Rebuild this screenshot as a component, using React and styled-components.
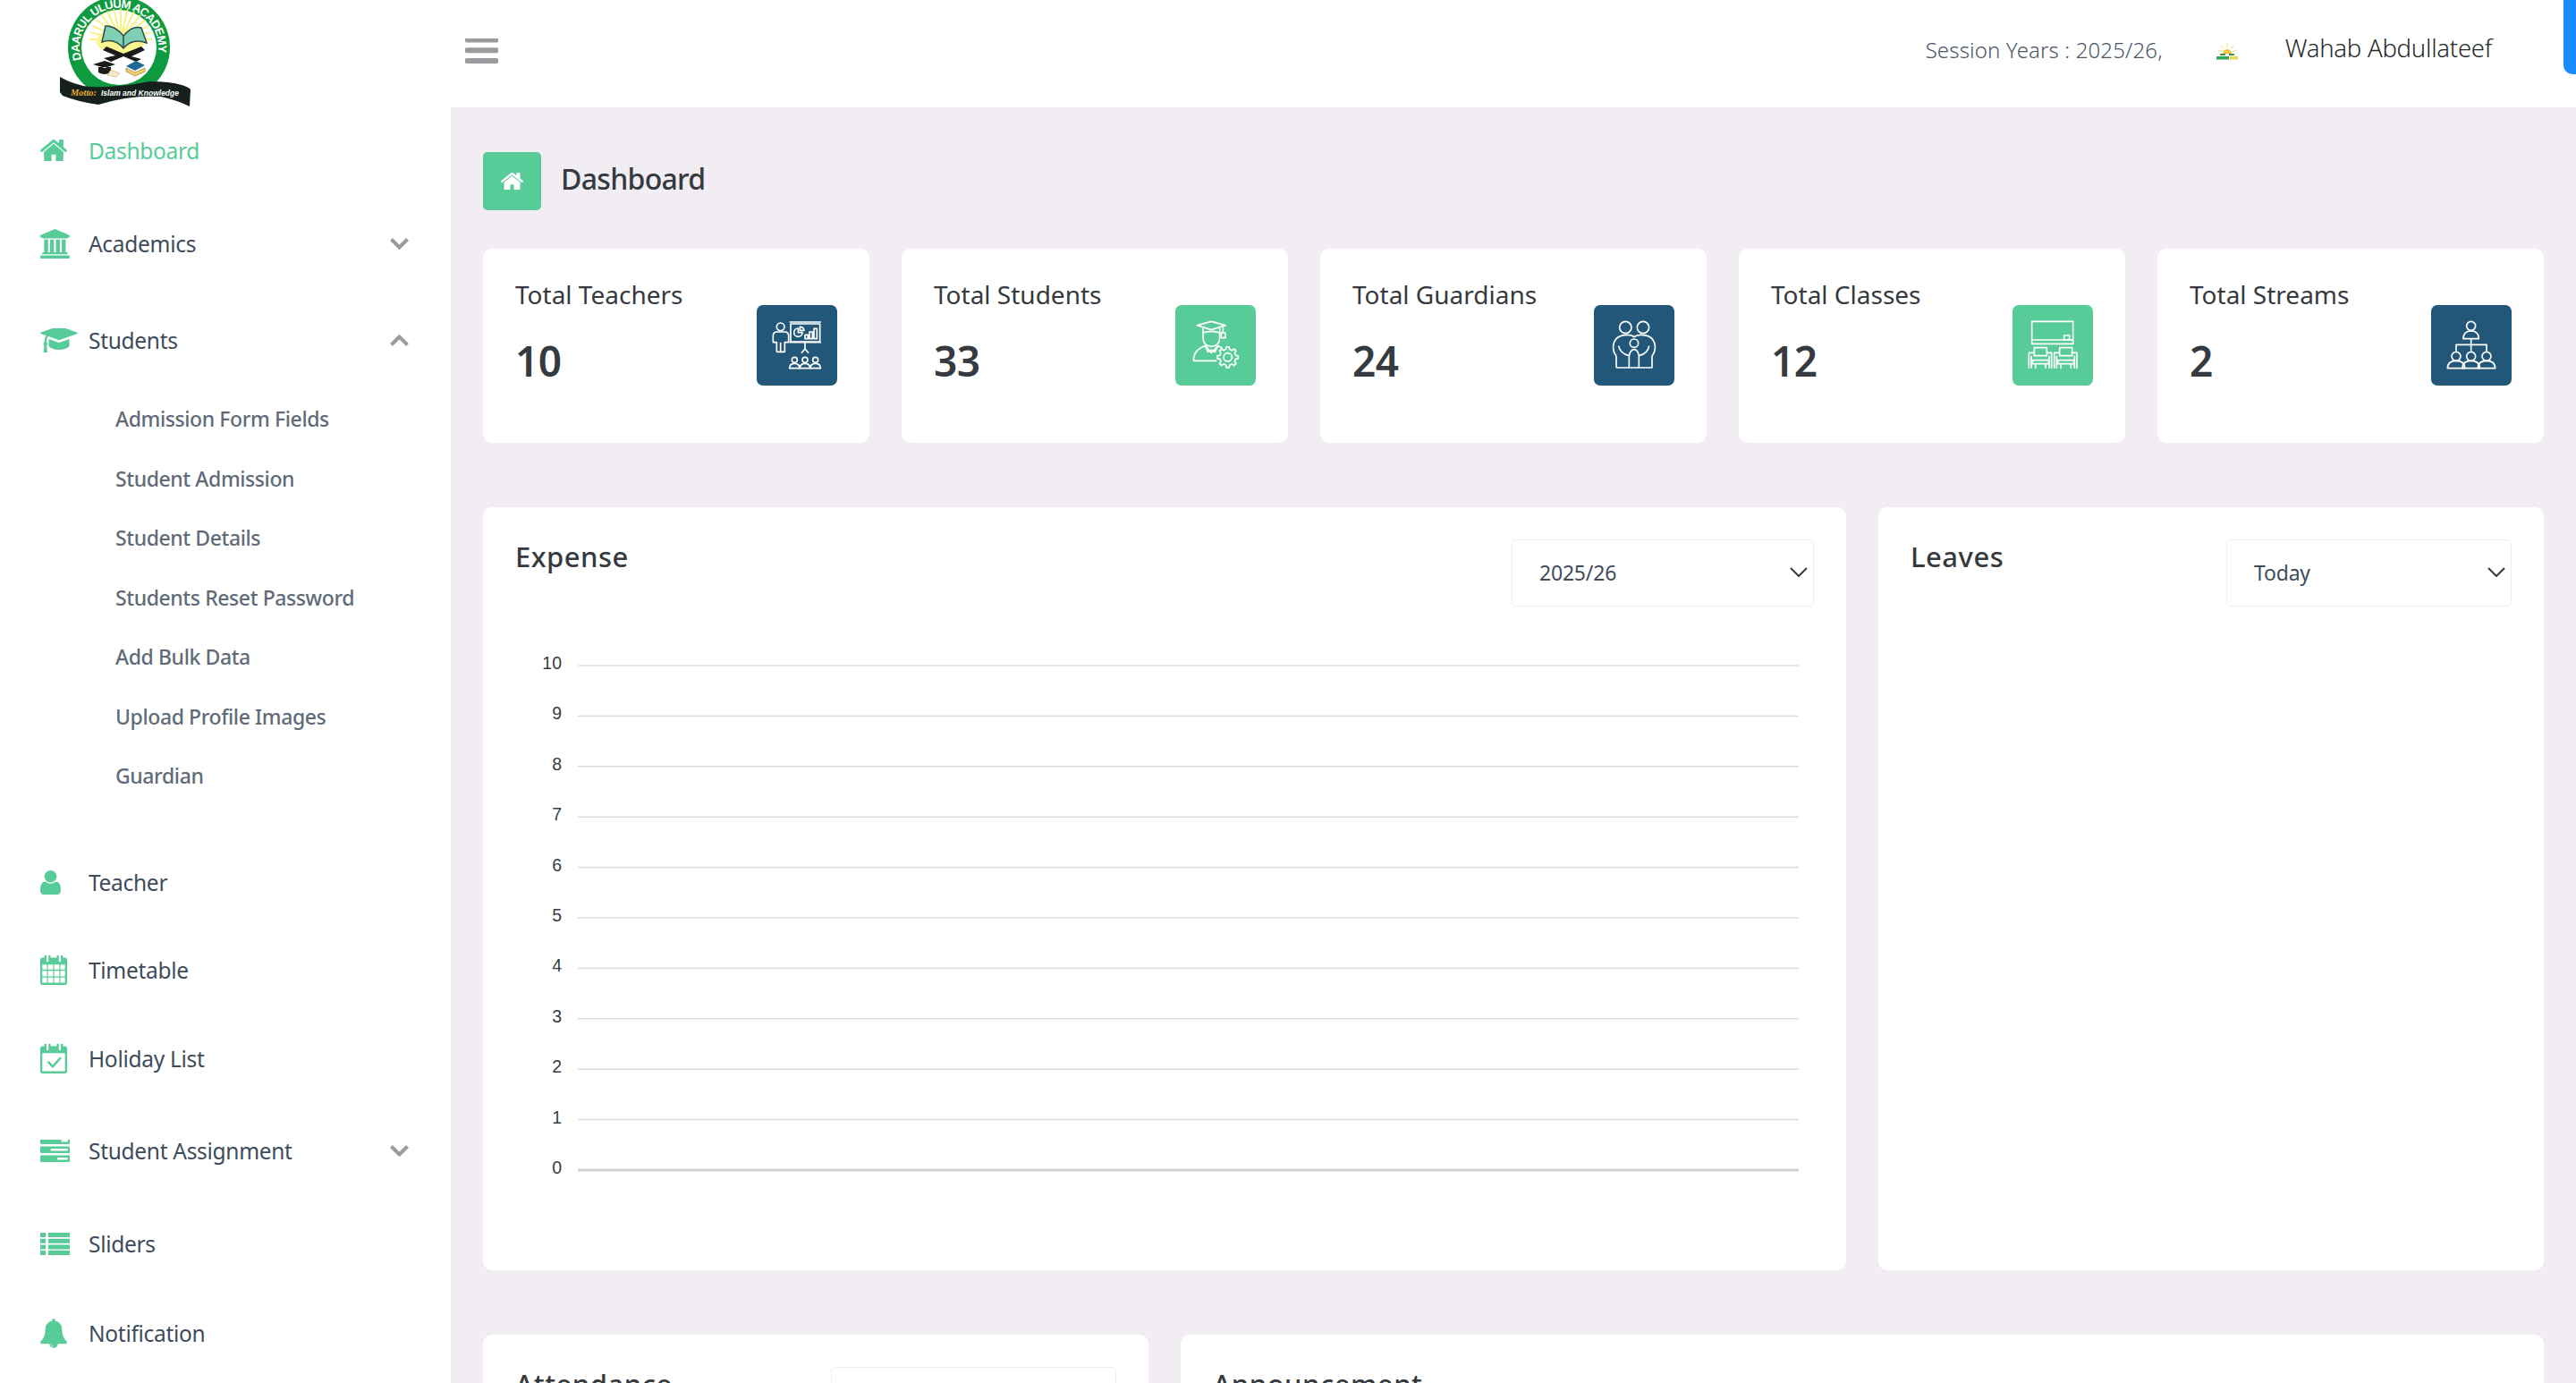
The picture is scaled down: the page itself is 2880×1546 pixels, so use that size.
import React from 'react';
import styled, { createGlobalStyle } from 'styled-components';

const GREEN = '#57cc99';
const NAVY = '#22577a';
const FONT = '"Noto Sans", "Open Sans", sans-serif';

const GlobalStyle = createGlobalStyle`
  html, body {
    margin: 0;
    padding: 0;
    height: 100%;
    overflow: hidden;
    background: #f2edf3;
    font-family: ${FONT};
  }
  * { box-sizing: border-box; }
`;

// font awesome 4 glyphs
const ICONS = {
  home: ['96 256 1600 1280', 'M1472 992v480q0 26-19 45t-45 19h-384v-384h-256v384h-384q-26 0-45-19t-19-45v-480q0-1 .5-3t.5-3l575-474 575 474q1 2 1 6zm223-69l-62 74q-8 9-21 11h-3q-13 0-21-7l-692-577-692 577q-12 8-24 7-13-2-21-11l-62-74q-8-10-7-23.5t11-21.5l719-599q32-26 76-26t76 26l244 204v-195q0-14 9-23t23-9h192q14 0 23 9t9 23v408l219 182q10 8 11 21.5t-7 23.5z'],
  bank: ['0 0 2048 1792', 'M960 0l960 384v128h-128q0 26-20.5 45t-48.5 19h-1526q-28 0-48.5-19t-20.5-45h-128v-128zm-704 640h256v768h128v-768h256v768h128v-768h256v768h128v-768h256v768h59q28 0 48.5 19t20.5 45v64h-1664v-64q0-26 20.5-45t48.5-19h59v-768zm1595 960q28 0 48.5 19t20.5 45v128h-1920v-128q0-26 20.5-45t48.5-19h1782z'],
  cap: ['0 256 2304 1300', 'M1774 836l18 316q4 69-82 128t-235 93.5-323 34.5-323-34.5-235-93.5-82-128l18-316 574 181q22 7 48 7t48-7zm530-324q0 23-22 31l-1120 352q-4 1-10 1t-10-1l-652-206q-43 34-71 111.5t-34 178.5q63 36 63 109 0 69-58 107l58 433q2 14-8 25-9 11-24 11h-192q-15 0-24-11-10-11-8-25l58-433q-58-38-58-107 0-73 65-111 11-207 98-330l-333-104q-22-8-22-31t22-31l1120-352q4-1 10-1t10 1l1120 352q22 8 22 31z'],
  user: ['256 128 1280 1536', 'M1536 1399q0 109-62.5 187t-150.500 78h-854q-88 0-150.500-78t-62.500-187q0-85 8.500-160.500t31.500-152 58.500-131 94-89 134.500-34.500q131 128 313 128t313-128q76 0 134.500 34.500t94 89 58.500 131 31.500 152 8.500 160.500zm-256-887q0 159-112.500 271.500t-271.500 112.500-271.500-112.500-112.500-271.500 112.500-271.500 271.500-112.500 271.500 112.500 112.500 271.500z'],
  calendar: ['0 128 1664 1664', 'M128 1664h288v-288h-288v288zm352 0h320v-288h-320v288zm-352-352h288v-320h-288v320zm352 0h320v-320h-320v320zm-352-384h288v-288h-288v288zm736 736h320v-288h-320v288zm-384-736h320v-288h-320v288zm768 736h288v-288h-288v288zm-384-352h320v-320h-320v320zm-352-864v-288q0-13-9.500-22.500t-22.500-9.500h-64q-13 0-22.500 9.500t-9.500 22.500v288q0 13 9.500 22.500t22.500 9.500h64q13 0 22.500-9.500t9.500-22.500zm736 864h288v-320h-288v320zm-384-384h320v-288h-320v288zm384 0h288v-288h-288v288zm32-480v-288q0-13-9.500-22.500t-22.500-9.500h-64q-13 0-22.500 9.500t-9.500 22.500v288q0 13 9.500 22.500t22.500 9.500h64q13 0 22.500-9.500t9.500-22.500zm384-64v1280q0 52-38 90t-90 38h-1408q-52 0-90-38t-38-90v-1280q0-52 38-90t90-38h128v-96q0-66 47-113t113-47h64q66 0 113 47t47 113v96h384v-96q0-66 47-113t113-47h64q66 0 113 47t47 113v96h128q52 0 90 38t38 90z'],
  check: ['0 128 1664 1664', 'M1303 964l-512 512q-10 9-23 9t-23-9l-288-288q-9-10-9-23t9-22l46-46q9-9 22-9t23 9l220 220 444-444q10-9 23-9t22 9l46 46q9 9 9 22t-9 23zm-1175 700h1408v-1024h-1408v1024zm384-1216v-288q0-14-9-23t-23-9h-64q-14 0-23 9t-9 23v288q0 14 9 23t23 9h64q14 0 23-9t9-23zm768 0v-288q0-14-9-23t-23-9h-64q-14 0-23 9t-9 23v288q0 14 9 23t23 9h64q14 0 23-9t9-23zm384-64v1280q0 52-38 90t-90 38h-1408q-52 0-90-38t-38-90v-1280q0-52 38-90t90-38h128v-96q0-66 47-113t113-47h64q66 0 113 47t47 113v96h384v-96q0-66 47-113t113-47h64q66 0 113 47t47 113v96h128q52 0 90 38t38 90z'],
  tasks: ['0 256 1792 1280', 'M1024 1408h640v-128h-640v128zm-384-512h1024v-128h-1024v128zm640-512h384v-128h-384v128zm512 832v256q0 26-19 45t-45 19h-1664q-26 0-45-19t-19-45v-256q0-26 19-45t45-19h1664q26 0 45 19t19 45zm0-512v256q0 26-19 45t-45 19h-1664q-26 0-45-19t-19-45v-256q0-26 19-45t45-19h1664q26 0 45 19t19 45zm0-512v256q0 26-19 45t-45 19h-1664q-26 0-45-19t-19-45v-256q0-26 19-45t45-19h1664q26 0 45 19t19 45z'],
  list: ['0 0 33 25', 'M0 0h6v5h-6zM9 0h24v5h-24zM0 6.700h6v5h-6zM9 6.700h24v5h-24zM0 13.400h6v5h-6zM9 13.400h24v5h-24zM0 20h6v5h-6zM9 20h24v5h-24z'],
  bell: ['64 0 1664 1792', 'M912 1696q0-16-16-16-59 0-101.500-42.500t-42.500-101.500q0-16-16-16t-16 16q0 73 51.500 124.500t124.500 51.500q16 0 16-16zm816-288q0 52-38 90t-90 38h-448q0 106-75 181t-181 75-181-75-75-181h-448q-52 0-90-38t-38-90q50-42 91-88t85-119.500 74.500-158.500 50-206 19.500-260q0-152 117-282.500t307-158.500q-8-19-8-39 0-40 28-68t68-28 68 28 28 68q0 20-8 39 190 28 307 158.500t117 282.500q0 139 19.500 260t50 206 74.500 158.500 85 119.500 91 88z'],
  bars: ['128 320 1536 1216', 'M1664 1344v128q0 26-19 45t-45 19h-1408q-26 0-45-19t-19-45v-128q0-26 19-45t45-19h1408q26 0 45 19t19 45zm0-512v128q0 26-19 45t-45 19h-1408q-26 0-45-19t-19-45v-128q0-26 19-45t45-19h1408q26 0 45 19t19 45zm0-512v128q0 26-19 45t-45 19h-1408q-26 0-45-19t-19-45v-128q0-26 19-45t45-19h1408q26 0 45 19t19 45z'],
};

const GlyphSvg = styled.svg`
  display: block;
  flex: none;
  width: ${(p) => p.$w}px;
  height: ${(p) => p.$h}px;
  fill: ${(p) => p.$color};
`;

function Glyph({ name, w, h, color = GREEN }) {
  const [box, d] = ICONS[name];
  return (
    <GlyphSvg viewBox={box} preserveAspectRatio="none" $w={w} $h={h} $color={color}>
      <path d={d} />
    </GlyphSvg>
  );
}

const Chevron = ({ up }) => (
  <ChevronSvg viewBox="0 0 21 13">
    <path d={up ? 'M1.500 11.500 10.500 2.500 19.500 11.500' : 'M1.500 1.500 10.500 10.500 19.500 1.500'} />
  </ChevronSvg>
);

const ChevronSvg = styled.svg`
  width: 21px;
  height: 13px;
  flex: none;
  margin-left: auto;
  fill: none;
  stroke: #9a9a9f;
  stroke-width: 4;
`;

const Layout = styled.div`
  display: grid;
  grid-template-columns: 504px 1fr;
  height: 100vh;
  overflow: hidden;
`;

const Sidebar = styled.aside`
  background: #fff;
  overflow: hidden;
  display: flex;
  flex-direction: column;
`;

const LogoBox = styled.div`
  height: 120px;
  flex: none;
  padding-left: 60px;
`;

const NavRow = styled.div`
  flex: none;
  display: flex;
  align-items: center;
  height: ${(p) => p.$h}px;
  padding: 0 47px 0 45px;
  font-size: 24.500px;
  letter-spacing: -0.3px;
  color: ${(p) => (p.$active ? GREEN : '#3e4b5b')};
`;

const NavIcon = styled.span`
  width: 54px;
  flex: none;
`;

const SubList = styled.div`
  flex: none;
  padding: 3px 0 0 129px;
  margin-bottom: 36px;
`;

const SubItem = styled.div`
  height: 66.500px;
  line-height: 66.500px;
  font-size: 23px;
  font-weight: 500;
  letter-spacing: -0.4px;
  color: #5f6b78;
`;

const Main = styled.main`
  min-width: 0;
  display: flex;
  flex-direction: column;
`;

const TopBar = styled.header`
  position: relative;
  flex: none;
  height: 120px;
  background: #fff;
  display: flex;
  align-items: center;
  padding: 0 94px 6px 16px;
`;

const Session = styled.span`
  margin: 0 0 4px auto;
  font-size: 24px;
  font-weight: 300;
  letter-spacing: 0.13px;
  color: #4a5568;
`;

const UserName = styled.span`
  margin: 0 0 8px 53px;
  font-size: 27.500px;
  font-weight: 300;
  letter-spacing: -0.25px;
  color: #1f2a2a;
`;

const TinyLogoSvg = styled.svg`
  flex: none;
  width: 24px;
  height: 19px;
  margin-left: 60px;
`;

const BlueTab = styled.div`
  position: absolute;
  top: 0;
  right: 0;
  width: 14px;
  height: 83px;
  background: #1a8cff;
  border-bottom-left-radius: 10px;
`;

const Content = styled.div`
  padding: 50px 36px 0;
  display: flex;
  flex-direction: column;
`;

const PageHead = styled.div`
  display: flex;
  align-items: center;
  gap: 22px;
  height: 65px;
  margin-bottom: 43px;
`;

const PageTile = styled.div`
  width: 65px;
  height: 65px;
  border-radius: 5px;
  background: ${GREEN};
  display: flex;
  align-items: center;
  justify-content: center;
`;

const PageTitle = styled.h1`
  margin: -6px 0 0;
  font-size: 32px;
  font-weight: 500;
  letter-spacing: -0.7px;
  color: #343a40;
`;

const StatRow = styled.div`
  display: grid;
  grid-template-columns: repeat(5, 1fr);
  gap: 36px;
  margin-bottom: 72px;
`;

const StatCard = styled.div`
  position: relative;
  height: 217px;
  background: #fff;
  border-radius: 10px;
  padding: 36px;
  display: grid;
  grid-template-columns: 1fr 90px;
`;

const StatText = styled.div`
  display: flex;
  flex-direction: column;
`;

const StatLabel = styled.div`
  margin-top: -2px;
  font-size: 28px;
  line-height: 34px;
  letter-spacing: 0;
  color: #343a40;
`;

const StatValue = styled.div`
  margin-top: 26px;
  font-size: 46px;
  line-height: 62px;
  font-weight: 600;
  letter-spacing: -0.5px;
  color: #343a40;
`;

const StatIconBox = styled.div`
  width: 90px;
  height: 90px;
  margin-top: 27px;
  border-radius: 7px;
  background: ${(p) => (p.$tone === 'navy' ? NAVY : GREEN)};
`;

const LineArt = styled.svg`
  display: block;
  width: 90px;
  height: 90px;
  fill: none;
  stroke: #fff;
  stroke-width: 5;
  stroke-linejoin: round;
`;

const PanelRow = styled.div`
  display: grid;
  grid-template-columns: ${(p) => p.$cols};
  gap: 36px;
  margin-bottom: 72px;
`;

const Panel = styled.section`
  background: #fff;
  border-radius: 10px;
  padding: 36px;
  height: ${(p) => p.$h}px;
`;

const PanelHead = styled.div`
  display: flex;
  justify-content: space-between;
  align-items: flex-start;
`;

const PanelTitle = styled.h2`
  margin: 0;
  font-size: 31px;
  line-height: 38px;
  font-weight: 500;
  letter-spacing: 0.5px;
  color: #343a40;
`;

const SelectBox = styled.div`
  width: ${(p) => p.$w}px;
  height: 75px;
  display: flex;
  align-items: center;
  justify-content: space-between;
  padding: 0 6px 2px 30px;
  border: 1px solid #eeeef1;
  border-radius: 5px;
  font-size: 23px;
  letter-spacing: -0.2px;
  color: #3e4b5b;
`;

const SelectArrow = styled.svg`
  width: 20px;
  height: 11px;
  fill: none;
  stroke: #343a40;
  stroke-width: 2;
`;

const ChartSvg = styled.svg`
  display: block;
  width: 1452px;
  height: 640px;
  margin-top: 22px;
  text {
    font-family: "Liberation Sans", Arial, sans-serif;
    font-size: 19.500px;
    fill: #373d3f;
  }
`;

const Select = ({ w, children }) => (
  <SelectBox $w={w}>
    {children}
    <SelectArrow viewBox="0 0 20 11">
      <path d="M1 1 10 10 19 1" />
    </SelectArrow>
  </SelectBox>
);

const gearPath = (cx, cy, outer, inner, teeth) => {
  const pts = [];
  const step = (Math.PI * 2) / teeth;
  for (let i = 0; i < teeth; i++) {
    const a = i * step - Math.PI / 2;
    [[-0.30, inner], [-0.17, outer], [0.17, outer], [0.30, inner]].forEach(([t, r]) => {
      pts.push(`${(cx + r * Math.cos(a + t * step)).toFixed(1)},${(cy + r * Math.sin(a + t * step)).toFixed(1)}`);
    });
  }
  return `M${pts.join('L')}Z`;
};

const person = (x, headY, r, top, bottom, half) => (
  <g key={x}>
    <circle cx={x} cy={headY} r={r} />
    <path d={`M${x - half},${bottom} Q${x - half},${top} ${x},${top} Q${x + half},${top} ${x + half},${bottom} Z`} />
  </g>
);

const TeacherArt = () => (
  <LineArt viewBox="18 35 270 270">
    <circle cx="98" cy="108" r="13" />
    <path d="M85,192 V160 H73 V138 Q73,125 86,125 H112 Q125,125 125,138 V160 H112 V192 H85 M98,160 V192" />
    <rect x="132" y="98" width="98" height="60" />
    <path d="M128,92 H234 M128,160 H234 M180,160 V182 M168,196 L180,182 L192,196" />
    <path d="M157,113 A14,14 0 1 0 171,127 H157 Z M163,108 A14,14 0 0 1 177,120 H163 Z" />
    <path d="M180,135 h10 v13 h-10 Z M195,125 h10 v23 h-10 Z M210,114 h10 v34 h-10 Z" />
    {[145, 180, 215].map((x) => person(x, 219, 9, 231, 247, 17))}
  </LineArt>
);

const GraduateArt = () => (
  <LineArt viewBox="27 35 270 270">
    <path d="M100,103 L148,90 L195,103 L148,118 Z" />
    <path d="M120,112 V142 Q120,172 148,174 Q176,172 176,142 V112 M120,128 Q148,118 176,128" />
    <path d="M187,106 V128 M181,128 H195 V145 H181 Z" />
    <path d="M88,222 Q88,184 128,172 L148,195 L170,172 Q178,176 186,180 M128,172 L136,192 L148,186 L160,192 L170,172 M88,222 H166" />
    <path d={gearPath(203, 210, 35, 27, 8)} />
    <circle cx="203" cy="210" r="14" />
  </LineArt>
);

const FamilyArt = () => (
  <LineArt viewBox="37 35 270 270">
    <circle cx="143" cy="110" r="20" />
    <circle cx="202" cy="110" r="20" />
    <circle cx="172" cy="163" r="14" />
    <path d="M112,245 V206 Q100,190 102,170 Q108,135 150,135 Q165,135 172,142 Q180,135 195,135 Q236,135 242,170 Q244,190 232,206 V245 H112" />
    <path d="M120,172 Q125,198 155,205 V245 M222,172 Q218,198 188,205 V245 M155,205 Q160,184 172,184 Q184,184 188,205" />
  </LineArt>
);

const Desk = ({ x }) => (
  <g transform={`translate(${x},0)`}>
    <rect x="118" y="178" width="42" height="27" />
    <rect x="112" y="220" width="54" height="12" />
    <path d="M122,232 V247 M156,232 V247 M100,247 V195 H118 M176,247 V195 H160 M108,247 V205 M168,247 V205" />
  </g>
);

const ClassArt = () => (
  <LineArt viewBox="45 35 270 270">
    <rect x="110" y="90" width="138" height="75" />
    <path d="M110,152 H248" />
    <rect x="218" y="137" width="18" height="15" />
    <Desk x={0} />
    <Desk x={85} />
  </LineArt>
);

const StreamArt = () => (
  <LineArt viewBox="54 35 270 270">
    {person(188, 105, 15, 122, 148, 26)}
    <path d="M188,148 V190 M138,190 V168 H240 V190" />
    {[138, 188, 240].map((x) => person(x, 207, 15, 222, 247, 29))}
  </LineArt>
);

function SchoolLogo() {
  return (
    <svg width="160" height="120" viewBox="60 0 160 120">
      <defs>
        <path id="ringArc" d="M91.200,66.600 A44,44 0 1 1 176.300,60.600" />
      </defs>
      <circle cx="133" cy="53" r="57" fill="#0e9a3e" />
      <circle cx="133" cy="53" r="42" fill="#fff" />
      <text fontFamily='"Liberation Sans", sans-serif' fontWeight="700" fontSize="13" fill="#fff">
        <textPath href="#ringArc" textLength="158">DAARUL ULUUM ACADEMY</textPath>
      </text>
      <g stroke="#f7ee6a" strokeWidth="1.600">
        {Array.from({ length: 15 }, (_, i) => {
          const a = Math.PI * (1 + i / 14);
          return <line key={i} x1="135" y1="44" x2={135 + 35 * Math.cos(a)} y2={44 + 35 * Math.sin(a)} />;
        })}
      </g>
      <ellipse cx="135" cy="46" rx="27" ry="15" fill="#fbf48f" />
      <path d="M114,47 L118,29 Q128,28 138,40 Q148,28 158,31 L164,48 Q148,42 138,54 Q128,42 114,47 Z" fill="#7fcfb4" stroke="#2e4d4a" strokeWidth="1.500" />
      <path d="M138,40 V54" stroke="#2e4d4a" strokeWidth="1.500" />
      <path d="M119,52 L138,60 L158,52 L162,56 L147,63 L158,66 L152,69 L138,63 L124,69 L116,65 L129,62 L115,56 Z" fill="#1a1a1a" />
      <path d="M104,72 L117,68 L129,72 L117,76 Z M110,75 V81 Q117,85 124,81 V75" fill="#1c1c1c" />
      <path d="M124,78 L134,82 L130,86 L120,84 Z" fill="#efe9d6" stroke="#d7a62b" strokeWidth=".6" />
      <path d="M141,74 L152,68 L162,73 L151,79 Z" fill="#1f6a94" />
      <path d="M141,76 L151,81 L162,76 V80 L151,85 L141,80 Z" fill="#efcf6a" stroke="#8a6d1f" strokeWidth=".6" />
      <path d="M67,86 Q83,95 100,97 Q135,98 167,91 Q190,91 203,95 Q210,97 213,100 L212,119 Q198,112 180,108 Q145,106 110,117 Q88,114 70,107 L67,103 Z" fill="#16201d" />
      <text x="79" y="107" fontFamily='"Liberation Serif", serif' fontStyle="italic" fontWeight="700" fontSize="10" fill="#e8ad30" textLength="29" lengthAdjust="spacingAndGlyphs">Motto:</text>
      <text x="113" y="107" fontFamily='"Liberation Sans", sans-serif' fontStyle="italic" fontWeight="700" fontSize="9.500" fill="#fff" textLength="87" lengthAdjust="spacingAndGlyphs">Islam and Knowledge</text>
    </svg>
  );
}

const TinyLogo = () => (
  <TinyLogoSvg viewBox="0 0 24 19">
    <path d="M12 0v5M5 3l3 4M19 3l-3 4M2 8l4 2M22 8l-4 2" stroke="#e8e07a" strokeWidth="1" />
    <path d="M7 12a5 5 0 0 1 10 0z" fill="#f0c93a" />
    <path d="M4 12h6v2h-6zM14 12h6v2h-6z" fill="#4d8a4d" />
    <rect x="0" y="15" width="14" height="3.500" fill="#2fa84f" />
    <rect x="15" y="15" width="9" height="3.500" fill="#e9d84a" />
  </TinyLogoSvg>
);

const stats = [
  { label: 'Total Teachers', value: 10, tone: 'navy', art: <TeacherArt /> },
  { label: 'Total Students', value: 33, tone: 'green', art: <GraduateArt /> },
  { label: 'Total Guardians', value: 24, tone: 'navy', art: <FamilyArt /> },
  { label: 'Total Classes', value: 12, tone: 'green', art: <ClassArt /> },
  { label: 'Total Streams', value: 2, tone: 'navy', art: <StreamArt /> },
];

const subItems = [
  'Admission Form Fields',
  'Student Admission',
  'Student Details',
  'Students Reset Password',
  'Add Bulk Data',
  'Upload Profile Images',
  'Guardian',
];

const lowerNav = [
  { label: 'Teacher', icon: 'user', w: 23, h: 27, row: 100 },
  { label: 'Timetable', icon: 'calendar', w: 30, h: 33, row: 96 },
  { label: 'Holiday List', icon: 'check', w: 30, h: 33, row: 102 },
  { label: 'Student Assignment', icon: 'tasks', w: 33, h: 25, row: 104, more: true },
  { label: 'Sliders', icon: 'list', w: 33, h: 25, row: 104 },
  { label: 'Notification', icon: 'bell', w: 30, h: 33, row: 96 },
];

const ticks = [10, 9, 8, 7, 6, 5, 4, 3, 2, 1, 0];

function ExpenseChart() {
  return (
    <ChartSvg viewBox="0 0 1452 640">
      {ticks.map((t, i) => {
        const y = 44 + i * 56.4;
        return (
          <g key={t}>
            <line x1="70" x2="1435" y1={y} y2={y} stroke={t === 0 ? '#d4d4d4' : '#dcdcdc'} strokeWidth={t === 0 ? 3 : 1.500} />
            <text x="52" y={y + 4} textAnchor="end">{t}</text>
          </g>
        );
      })}
    </ChartSvg>
  );
}

export default function App() {
  return (
    <Layout>
      <GlobalStyle />
      <Sidebar>
        <LogoBox>
          <SchoolLogo />
        </LogoBox>
        <NavRow $h={96} $active>
          <NavIcon><Glyph name="home" w={30} h={24} /></NavIcon>
          Dashboard
        </NavRow>
        <NavRow $h={112}>
          <NavIcon><Glyph name="bank" w={35} h={33} /></NavIcon>
          Academics
          <Chevron />
        </NavRow>
        <NavRow $h={104}>
          <NavIcon><Glyph name="cap" w={42} h={27} /></NavIcon>
          Students
          <Chevron up />
        </NavRow>
        <SubList>
          {subItems.map((s) => <SubItem key={s}>{s}</SubItem>)}
        </SubList>
        {lowerNav.map((n) => (
          <NavRow key={n.label} $h={n.row}>
            <NavIcon><Glyph name={n.icon} w={n.w} h={n.h} /></NavIcon>
            {n.label}
            {n.more && <Chevron />}
          </NavRow>
        ))}
      </Sidebar>
      <Main>
        <TopBar>
          <Glyph name="bars" w={37} h={28} color="#9a9a9f" />
          <Session>Session Years : 2025/26,</Session>
          <TinyLogo />
          <UserName>Wahab Abdullateef</UserName>
          <BlueTab />
        </TopBar>
        <Content>
          <PageHead>
            <PageTile><Glyph name="home" w={25} h={19} color="#fff" /></PageTile>
            <PageTitle>Dashboard</PageTitle>
          </PageHead>
          <StatRow>
            {stats.map((s) => (
              <StatCard key={s.label}>
                <StatText>
                  <StatLabel>{s.label}</StatLabel>
                  <StatValue>{s.value}</StatValue>
                </StatText>
                <StatIconBox $tone={s.tone}>{s.art}</StatIconBox>
              </StatCard>
            ))}
          </StatRow>
          <PanelRow $cols="1fr 744px">
            <Panel $h={853}>
              <PanelHead>
                <PanelTitle>Expense</PanelTitle>
                <Select w={338}>2025/26</Select>
              </PanelHead>
              <ExpenseChart />
            </Panel>
            <Panel $h={853}>
              <PanelHead>
                <PanelTitle>Leaves</PanelTitle>
                <Select w={319}>Today</Select>
              </PanelHead>
            </Panel>
          </PanelRow>
          <PanelRow $cols="744px 1fr">
            <Panel $h={400}>
              <PanelHead>
                <PanelTitle>Attendance</PanelTitle>
                <Select w={319}>Today</Select>
              </PanelHead>
            </Panel>
            <Panel $h={400}>
              <PanelHead>
                <PanelTitle>Announcement</PanelTitle>
              </PanelHead>
            </Panel>
          </PanelRow>
        </Content>
      </Main>
    </Layout>
  );
}
